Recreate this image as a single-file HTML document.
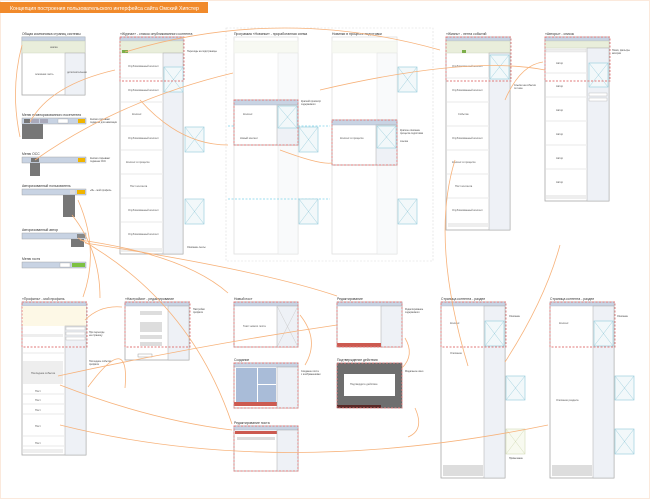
<!DOCTYPE html>
<html><head><meta charset="utf-8"><style>
html,body{margin:0;padding:0;background:#fff;width:650px;height:499px;overflow:hidden;}
svg{display:block;font-family:"Liberation Sans","Noto Sans CJK SC",sans-serif;}
.pg{fill:#fff;stroke:#a9a9a9;stroke-width:.8}
.hd{fill:#c8d3e3;stroke:#a9b4c4;stroke-width:.4}
.sb{fill:#eef1f6;stroke:#a9a9a9;stroke-width:.5}
.gr{fill:#e9eedb;stroke:#c9cfb8;stroke-width:.4}
.rd{fill:none;stroke:#e07a7a;stroke-width:.9;stroke-dasharray:2 1.5}
.cy{fill:none;stroke:#7fd3ea;stroke-width:.7;stroke-dasharray:2 1.5}
.ln{stroke:#eeeeee;stroke-width:1.2}
.im{fill:#f2f8fa;stroke:#9fd0de;stroke-width:.7}
.ix{stroke:#9fd0de;stroke-width:.5}
.or{fill:none;stroke:#f7b27a;stroke-width:.8}
.t{font-size:2.6px;fill:#555}
.h{font-size:3.4px;fill:#333}
.n{font-size:2.4px;fill:#444}
.fd{opacity:.35}
</style></head><body>
<svg width="650" height="499" viewBox="0 0 650 499" xmlns="http://www.w3.org/2000/svg">
<rect x="0.5" y="0.5" width="649" height="498" fill="#fff" stroke="#fbe9dc"/>
<rect x="0" y="2" width="208" height="11" fill="#f18a2b"/>
<text x="10" y="10" font-size="5.2" fill="#fff">Концепция построения пользовательского интерфейса сайта Омский Хипстер</text>

<text class="h" x="22" y="35">Общая компоновка страниц системы</text>
<rect class="pg" x="22" y="37" width="63" height="58"/>
<rect class="hd" x="22" y="37" width="63" height="4"/>
<rect class="gr" x="22" y="41" width="63" height="12"/>
<text class="t" x="50" y="48">шапка</text>
<rect class="sb" x="65" y="53" width="20" height="42"/>
<text class="t" x="35" y="75">основная часть</text>
<text class="t" x="67" y="73">дополнительная</text>

<g>
<text class="h" x="22" y="116">Меню неавторизованного посетителя</text>
<rect x="22" y="118" width="64" height="6" fill="#c8d3e3" stroke="#999" stroke-width=".4"/>
<rect x="24" y="119" width="6" height="4" fill="#777"/><rect x="31" y="119" width="8" height="4" fill="#aab"/><rect x="40" y="119" width="8" height="4" fill="#aab"/>
<rect x="58" y="119" width="10" height="4" fill="#fff" stroke="#999" stroke-width=".3"/><rect x="78" y="119" width="7" height="4" fill="#f0b400"/>
<rect x="22" y="124" width="21" height="15" fill="#777"/>
<text class="n" x="90" y="120">Кнопки открывают</text><text class="n" x="90" y="123">подменю для навигации</text>

<text class="h" x="22" y="155">Меню ОСС</text>
<rect x="22" y="157" width="64" height="6" fill="#c8d3e3" stroke="#999" stroke-width=".4"/>
<rect x="31" y="158" width="8" height="4" fill="#777"/><rect x="78" y="158" width="7" height="4" fill="#f0b400"/>
<rect x="30" y="163" width="10" height="13" fill="#777"/>
<text class="n" x="90" y="159">Кнопки открывают</text><text class="n" x="90" y="162">подменю ОСС</text>

<text class="h" x="22" y="187">Авторизованный пользователь</text>
<rect x="22" y="189" width="64" height="6" fill="#c8d3e3" stroke="#999" stroke-width=".4"/>
<rect x="70" y="190" width="5" height="4" fill="#ddd"/><rect x="77" y="190" width="8" height="4" fill="#f0b400"/>
<rect x="63" y="195" width="12" height="22" fill="#777"/>
<text class="n" x="90" y="191">«Я» - мой профиль</text>

<text class="h" x="22" y="231">Авторизованный автор</text>
<rect x="22" y="233" width="64" height="6" fill="#c8d3e3" stroke="#999" stroke-width=".4"/>
<rect x="77" y="234" width="8" height="4" fill="#888"/>
<rect x="71" y="239" width="13" height="8" fill="#777"/>

<text class="h" x="22" y="260">Меню гостя</text>
<rect x="22" y="262" width="64" height="6" fill="#c8d3e3" stroke="#999" stroke-width=".4"/>
<rect x="60" y="263" width="10" height="4" fill="#fff" stroke="#999" stroke-width=".3"/><rect x="72" y="263" width="13" height="4" fill="#7dc142"/>
</g>

<text class="h" x="120" y="35">«Журнал» - список опубликованного контента</text>
<rect class="pg" x="120" y="37" width="63" height="217"/>
<rect class="hd" x="120" y="37" width="63" height="4"/>
<rect class="gr" x="120" y="41" width="63" height="12"/>
<rect x="122" y="50" width="6" height="3" fill="#7cae4a"/>
<rect class="sb" x="163" y="53" width="20" height="201"/>
<g class="ln"><line x1="121" x2="163" y1="78" y2="78"/><line x1="121" x2="163" y1="102" y2="102"/><line x1="121" x2="163" y1="126" y2="126"/><line x1="121" x2="163" y1="150" y2="150"/><line x1="121" x2="163" y1="174" y2="174"/><line x1="121" x2="163" y1="198" y2="198"/><line x1="121" x2="163" y1="222" y2="222"/></g>
<text class="t" x="128" y="67">Опубликованный контент</text><text class="t" x="128" y="91">Опубликованный контент</text><text class="t" x="132" y="115">Контент</text><text class="t" x="128" y="139">Опубликованный контент</text><text class="t" x="126" y="163">Контент в процессе</text><text class="t" x="130" y="187">Пост контента</text><text class="t" x="128" y="211">Опубликованный контент</text><text class="t" x="128" y="235">Опубликованный контент</text>
<rect x="121" y="248" width="42" height="4" fill="#eee"/>
<rect class="im" x="164" y="67" width="19" height="25"/><line class="ix" x1="164" y1="67" x2="183" y2="92"/><line class="ix" x1="183" y1="67" x2="164" y2="92"/>
<rect class="rd" x="120" y="37" width="64" height="44"/>
<text class="n" x="187" y="52">Переходы на подстраницы</text>
<rect class="im" x="185" y="127" width="19" height="25"/><line class="ix" x1="185" y1="127" x2="204" y2="152"/><line class="ix" x1="204" y1="127" x2="185" y2="152"/>
<rect class="im" x="185" y="199" width="19" height="25"/><line class="ix" x1="185" y1="199" x2="204" y2="224"/><line class="ix" x1="204" y1="199" x2="185" y2="224"/>
<text class="n" x="187" y="248">Описание ленты</text>

<rect x="226" y="28" width="207" height="233" fill="none" stroke="#ddd" stroke-width=".6" stroke-dasharray="2 1.5"/>
<text class="h" x="234" y="35">Программа «Новинки» - проработанная схема</text>
<text class="h" x="332" y="35">Новинки в процессе подготовки</text>
<g class="fd">
<rect class="pg" x="234" y="37" width="64" height="217"/><rect class="gr" x="234" y="41" width="64" height="12"/><rect class="sb" x="278" y="53" width="20" height="201"/>
<rect class="pg" x="332" y="37" width="65" height="217"/><rect class="gr" x="332" y="41" width="65" height="12"/><rect class="sb" x="377" y="53" width="20" height="201"/>
</g>
<line class="cy" x1="228" x2="330" y1="126" y2="126"/><line class="cy" x1="228" x2="330" y1="199" y2="199"/>
<rect class="im" x="299" y="127" width="19" height="25"/><line class="ix" x1="299" y1="127" x2="318" y2="152"/><line class="ix" x1="318" y1="127" x2="299" y2="152"/>
<rect class="im" x="299" y="199" width="19" height="25"/><line class="ix" x1="299" y1="199" x2="318" y2="224"/><line class="ix" x1="318" y1="199" x2="299" y2="224"/>
<rect class="im" x="398" y="67" width="19" height="25"/><line class="ix" x1="398" y1="67" x2="417" y2="92"/><line class="ix" x1="417" y1="67" x2="398" y2="92"/>
<rect class="im" x="398" y="199" width="19" height="25"/><line class="ix" x1="398" y1="199" x2="417" y2="224"/><line class="ix" x1="417" y1="199" x2="398" y2="224"/>
<rect class="pg" x="234" y="100" width="64" height="45"/><rect class="hd" x="234" y="100" width="64" height="5"/><rect class="sb" x="277" y="105" width="21" height="40"/>
<rect class="im" x="278" y="106" width="19" height="22"/><line class="ix" x1="278" y1="106" x2="297" y2="128"/><line class="ix" x1="297" y1="106" x2="278" y2="128"/>
<text class="t" x="243" y="115">Контент</text><text class="t" x="240" y="139">Новый контент</text>
<rect class="rd" x="234" y="100" width="64" height="45"/>
<text class="n" x="301" y="102">Краткий просмотр</text><text class="n" x="301" y="105">содержимого</text>
<rect class="pg" x="332" y="120" width="65" height="45"/><rect class="hd" x="332" y="120" width="65" height="5"/><rect class="sb" x="376" y="125" width="21" height="40"/>
<rect class="im" x="377" y="126" width="19" height="22"/><line class="ix" x1="377" y1="126" x2="396" y2="148"/><line class="ix" x1="396" y1="126" x2="377" y2="148"/>
<text class="t" x="340" y="139">Контент в процессе</text>
<rect class="rd" x="332" y="120" width="65" height="45"/>
<text class="n" x="400" y="131">Краткое описание</text><text class="n" x="400" y="134">процесса подготовки</text><text class="n" x="400" y="142" fill="#3a8fd8">ссылка</text>

<text class="h" x="446" y="35">«Жизнь» - лента событий</text>
<rect class="pg" x="446" y="37" width="64" height="193"/>
<rect class="hd" x="446" y="37" width="64" height="4"/>
<rect class="gr" x="446" y="41" width="64" height="12"/><rect x="462" y="50" width="4" height="3" fill="#7cae4a"/>
<rect class="sb" x="489" y="53" width="21" height="177"/>
<g class="ln"><line x1="447" x2="489" y1="78" y2="78"/><line x1="447" x2="489" y1="102" y2="102"/><line x1="447" x2="489" y1="126" y2="126"/><line x1="447" x2="489" y1="150" y2="150"/><line x1="447" x2="489" y1="174" y2="174"/><line x1="447" x2="489" y1="198" y2="198"/></g>
<text class="t" x="452" y="67">Опубликованный контент</text><text class="t" x="452" y="91">Опубликованный контент</text><text class="t" x="458" y="115">Событие</text><text class="t" x="452" y="139">Опубликованный контент</text><text class="t" x="452" y="163">Контент в процессе</text><text class="t" x="455" y="187">Пост контента</text><text class="t" x="452" y="211">Опубликованный контент</text>
<rect x="448" y="223" width="40" height="4" fill="#eee"/>
<rect class="im" x="490" y="55" width="19" height="24"/><line class="ix" x1="490" y1="55" x2="509" y2="79"/><line class="ix" x1="509" y1="55" x2="490" y2="79"/>
<rect class="rd" x="446" y="37" width="65" height="44"/>
<text class="n" x="514" y="86">Ссылки на события</text><text class="n" x="514" y="89">по теме</text>

<text class="h" x="545" y="35">«Авторы» - список</text>
<rect class="pg" x="545" y="37" width="64" height="164"/>
<rect class="hd" x="545" y="37" width="64" height="4"/>
<rect class="gr" x="545" y="41" width="64" height="7"/>
<rect class="sb" x="587" y="48" width="22" height="153"/>
<rect x="546" y="49" width="40" height="3" fill="#eee" stroke="#ccc" stroke-width=".3"/>
<g class="ln"><line x1="546" x2="587" y1="73" y2="73"/><line x1="546" x2="587" y1="97" y2="97"/><line x1="546" x2="587" y1="121" y2="121"/><line x1="546" x2="587" y1="145" y2="145"/><line x1="546" x2="587" y1="169" y2="169"/></g>
<text class="t" x="556" y="64">Автор</text><text class="t" x="556" y="87">Автор</text><text class="t" x="556" y="111">Автор</text><text class="t" x="556" y="135">Автор</text><text class="t" x="556" y="159">Автор</text><text class="t" x="556" y="183">Автор</text>
<rect x="546" y="195" width="40" height="4" fill="#eee"/>
<rect class="im" x="589" y="63" width="19" height="24"/><line class="ix" x1="589" y1="63" x2="608" y2="87"/><line class="ix" x1="608" y1="63" x2="589" y2="87"/>
<rect x="589" y="93" width="18" height="3" fill="#fff" stroke="#999" stroke-width=".3"/><rect x="589" y="98" width="18" height="3" fill="#fff" stroke="#999" stroke-width=".3"/>
<rect class="rd" x="545" y="37" width="65" height="44"/>
<text class="n" x="612" y="51">Поиск, фильтры</text><text class="n" x="612" y="54">авторов</text>

<text class="h" x="22" y="300">«Профиль» - мой профиль</text>
<rect class="pg" x="22" y="302" width="64" height="153"/>
<rect class="hd" x="22" y="302" width="64" height="4"/>
<rect x="22" y="306" width="64" height="20" fill="#fdf8e6"/>
<rect class="sb" x="65" y="326" width="21" height="129"/>
<rect x="23" y="334" width="40" height="3" fill="#eee"/>
<rect x="23" y="361" width="40" height="23" fill="#eee"/>
<g class="ln"><line x1="23" x2="64" y1="353" y2="353"/><line x1="23" x2="64" y1="394" y2="394"/><line x1="23" x2="64" y1="404" y2="404"/><line x1="23" x2="64" y1="414" y2="414"/><line x1="23" x2="64" y1="436" y2="436"/><line x1="23" x2="64" y1="446" y2="446"/></g>
<text class="t" x="31" y="374">Последнее событие</text><text class="t" x="35" y="392">Пост</text><text class="t" x="35" y="401">Пост</text><text class="t" x="35" y="411">Пост</text><text class="t" x="35" y="427">Пост</text><text class="t" x="35" y="444">Пост</text>
<rect x="23" y="449" width="40" height="4" fill="#eee"/>
<rect x="66" y="327" width="19" height="3" fill="#fff" stroke="#999" stroke-width=".3"/><rect x="66" y="332" width="19" height="3" fill="#fff" stroke="#999" stroke-width=".3"/><rect x="66" y="337" width="19" height="3" fill="#fff" stroke="#999" stroke-width=".3"/>
<rect class="rd" x="22" y="302" width="65" height="45"/>
<text class="n" x="89" y="333">При переходе</text><text class="n" x="89" y="336">на страницу</text>
<text class="n" x="89" y="362">Последние события</text><text class="n" x="89" y="365">профиля</text>

<text class="h" x="125" y="300">«Настройки» - редактирование</text>
<rect class="pg" x="125" y="302" width="64" height="58"/>
<rect class="hd" x="125" y="302" width="64" height="4"/>
<rect class="sb" x="168" y="306" width="21" height="54"/>
<rect x="140" y="311" width="22" height="4" fill="#ddd"/><rect x="140" y="322" width="22" height="10" fill="#ddd"/><rect x="140" y="335" width="22" height="4" fill="#ddd"/><rect x="140" y="342" width="22" height="4" fill="#ddd"/>
<rect x="138" y="354" width="14" height="3" fill="#fff" stroke="#888" stroke-width=".4"/>
<rect class="rd" x="125" y="302" width="65" height="45"/>
<text class="n" x="193" y="310">Настройки</text><text class="n" x="193" y="313">профиля</text>

<text class="h" x="234" y="300">Новый пост</text>
<rect class="pg" x="234" y="302" width="64" height="45"/><rect class="hd" x="234" y="302" width="64" height="4"/>
<rect class="sb" x="277" y="306" width="21" height="41"/><line x1="277" y1="306" x2="298" y2="347" stroke="#ccc" stroke-width=".5"/><line x1="298" y1="306" x2="277" y2="347" stroke="#ccc" stroke-width=".5"/>
<text class="t" x="243" y="327">Текст нового поста</text>
<rect class="rd" x="234" y="302" width="64" height="45"/>

<text class="h" x="234" y="361">Создание</text>
<rect class="pg" x="234" y="363" width="64" height="45"/><rect class="hd" x="234" y="363" width="64" height="4"/>
<rect x="236" y="368" width="21" height="34" fill="#a9bcd8"/><rect x="258" y="368" width="18" height="16" fill="#a9bcd8"/><rect x="258" y="385" width="18" height="17" fill="#a9bcd8"/>
<rect x="234" y="402" width="43" height="4" fill="#cc5a50"/>
<rect class="sb" x="277" y="367" width="21" height="41"/>
<rect class="rd" x="234" y="363" width="64" height="45"/>
<text class="n" x="301" y="372">Создание поста</text><text class="n" x="301" y="375">с изображениями</text>

<text class="h" x="234" y="424">Редактирование поста</text>
<rect class="pg" x="234" y="426" width="64" height="45"/><rect class="hd" x="234" y="426" width="64" height="4"/>
<rect x="235" y="431" width="42" height="3" fill="#cc5a50"/>
<rect x="237" y="437" width="38" height="3" fill="#ddd"/>
<rect class="sb" x="277" y="430" width="21" height="41"/>
<rect class="rd" x="234" y="426" width="64" height="45"/>

<text class="h" x="337" y="300">Редактирование</text>
<rect class="pg" x="337" y="302" width="65" height="45"/><rect class="hd" x="337" y="302" width="65" height="4"/>
<rect class="sb" x="381" y="306" width="21" height="41"/>
<rect x="337" y="343" width="44" height="4" fill="#cc5a50"/>
<rect class="rd" x="337" y="302" width="65" height="45"/>
<text class="n" x="405" y="310">Редактирование</text><text class="n" x="405" y="313">содержимого</text>

<text class="h" x="337" y="361">Подтверждение действия</text>
<rect x="337" y="363" width="65" height="45" fill="#6e6e6e" stroke="#555" stroke-width=".5"/>
<rect x="337" y="405" width="44" height="3" fill="#5a2a28"/>
<rect x="344" y="374" width="51" height="22" fill="#fff"/>
<text class="t" x="350" y="385">Подтвердите действие</text>
<rect class="rd" x="337" y="363" width="65" height="45"/>
<text class="n" x="405" y="372">Модальное окно</text>

<text class="h" x="441" y="300">Страница контента - раздел</text>
<rect class="pg" x="441" y="302" width="64" height="176"/><rect class="hd" x="441" y="302" width="64" height="4"/>
<rect class="sb" x="484" y="306" width="21" height="172"/>
<rect class="im" x="485" y="321" width="19" height="25"/><line class="ix" x1="485" y1="321" x2="504" y2="346"/><line class="ix" x1="504" y1="321" x2="485" y2="346"/>
<text class="t" x="450" y="324">Контент</text><text class="t" x="450" y="354">Описание</text>
<rect x="443" y="465" width="40" height="11" fill="#ddd"/>
<rect class="rd" x="441" y="302" width="65" height="45"/>
<rect class="im" x="506" y="376" width="19" height="24"/><line class="ix" x1="506" y1="376" x2="525" y2="400"/><line class="ix" x1="525" y1="376" x2="506" y2="400"/>
<rect x="506" y="429" width="19" height="25" fill="#f8faf0" stroke="#d4dcb8" stroke-width=".6"/><line x1="506" y1="429" x2="525" y2="454" stroke="#d4dcb8" stroke-width=".5"/><line x1="525" y1="429" x2="506" y2="454" stroke="#d4dcb8" stroke-width=".5"/>
<text class="n" x="509" y="317">Описание</text><text class="n" x="509" y="459">Примечание</text>

<text class="h" x="550" y="300">Страница контента - раздел</text>
<rect class="pg" x="550" y="302" width="64" height="176"/><rect class="hd" x="550" y="302" width="64" height="4"/>
<rect class="sb" x="593" y="306" width="21" height="172"/>
<rect class="im" x="594" y="321" width="19" height="25"/><line class="ix" x1="594" y1="321" x2="613" y2="346"/><line class="ix" x1="613" y1="321" x2="594" y2="346"/>
<text class="t" x="559" y="324">Контент</text><text class="t" x="556" y="401">Описание раздела</text>
<rect x="552" y="465" width="40" height="11" fill="#ddd"/>
<rect class="rd" x="550" y="302" width="65" height="45"/>
<rect class="im" x="615" y="376" width="19" height="24"/><line class="ix" x1="615" y1="376" x2="634" y2="400"/><line class="ix" x1="634" y1="376" x2="615" y2="400"/>
<rect class="im" x="615" y="429" width="19" height="25"/><line class="ix" x1="615" y1="429" x2="634" y2="454"/><line class="ix" x1="634" y1="429" x2="615" y2="454"/>
<text class="n" x="617" y="317">Описание</text>

<g class="or">
<path d="M22 45 Q10 90 20 137"/>
<path d="M30 122 Q50 85 115 70"/>
<path d="M35 160 Q120 100 233 73"/>
<path d="M125 52 Q280 5 440 50"/>
<path d="M140 100 Q180 145 228 145"/>
<path d="M280 150 Q320 165 332 163"/>
<path d="M320 90 Q470 55 545 70"/>
<path d="M505 100 Q520 65 543 62"/>
<path d="M455 160 Q430 240 468 366"/>
<path d="M560 245 Q545 300 505 362"/>
<path d="M78 200 Q100 250 83 297"/>
<path d="M72 215 Q100 250 100 298"/>
<path d="M80 240 Q185 255 228 293"/>
<path d="M85 243 Q260 270 337 296"/>
<path d="M78 238 Q190 300 232 424"/>
<path d="M88 387 Q130 330 125 388"/>
<path d="M58 376 Q200 345 337 325"/>
<path d="M60 385 Q150 420 232 430"/>
<path d="M60 425 Q280 480 548 425"/>
<path d="M85 320 Q100 305 122 307"/>
<path d="M300 315 Q320 340 305 365"/>
<path d="M415 408 Q425 430 408 437"/>
<path d="M405 338 Q415 355 402 368"/>
</g>
</svg>
</body></html>
